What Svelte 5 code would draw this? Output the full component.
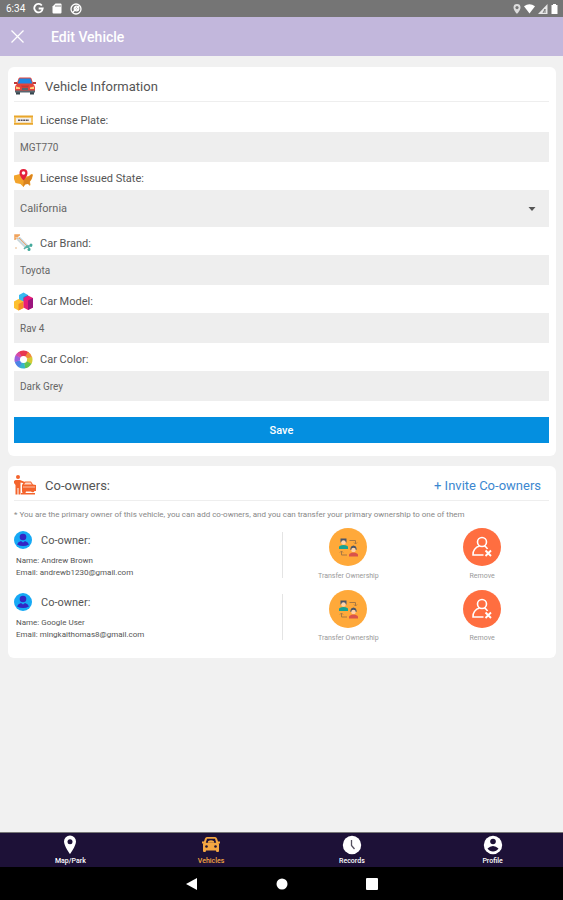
<script lang="ts">
	interface CoOwner {
		id: number;
		name: string;
		email: string;
	}

	const coOwners: CoOwner[] = [
		{ id: 1, name: 'Andrew Brown', email: 'andrewb1230@gmail.com' },
		{ id: 2, name: 'Google User', email: 'mingkaithomas8@gmail.com' }
	];

	const states = ['California', 'Nevada', 'Oregon', 'Washington'];
	const tabs = ['Map/Park', 'Vehicles', 'Records', 'Profile'];

	let plate = $state('MGT770');
	let issuedState = $state('California');
	let brand = $state('Toyota');
	let model = $state('Rav 4');
	let color = $state('Dark Grey');
	let activeTab = $state('Vehicles');
</script>

<div class="screen">
	<div class="status">
		<span>6:34</span>
		<svg width="11" height="11" viewBox="0 0 12 12" fill="none" stroke="#fff" stroke-width="2">
			<path d="M9.6 2.7A4.6 4.6 0 1 0 10.6 6H6.2" />
		</svg>
		<svg width="10" height="11" viewBox="0 0 10 11">
			<path fill="#fff" d="M3.5 0.5H8.5Q9.5 .5 9.5 1.5V9.5Q9.5 10.5 8.5 10.5H1.5Q.5 10.5 .5 9.5V3.5Z" />
			<path stroke="#888" d="M4 2v2M6 2v2M8 2v2" />
		</svg>
		<svg width="12" height="12" viewBox="0 0 12 12" fill="none" stroke="#fff" stroke-width="1.3">
			<circle cx="6" cy="6" r="5" />
			<circle cx="6.5" cy="5.5" r="2.3" />
			<path d="M2.5 9.5 9 3M4.8 4l3.4 3.4" />
		</svg>
		<div class="signals">
			<svg width="8" height="10" viewBox="0 0 8 10">
				<path fill="#ddd" d="M4 0a3.5 3.5 0 0 1 3.5 3.6C7.5 6.5 4 10 4 10S.5 6.5.5 3.6A3.5 3.5 0 0 1 4 0Z" />
				<circle cx="4" cy="3.6" r="1.6" fill="#777" />
			</svg>
			<svg width="11" height="10" viewBox="0 0 11 10">
				<path fill="#fff" d="M0 2.2Q5.5-1.5 11 2.2L5.5 9.5Z" />
			</svg>
			<svg width="10" height="10" viewBox="0 0 10 10">
				<path fill="#e8e8e8" d="M0 10 9.5 0V10Z" />
				<path stroke="#777" fill="none" d="M5 9l2-4v4" />
			</svg>
			<svg width="7" height="10" viewBox="0 0 7 10">
				<path fill="#fff" d="M2 0H5V1H6.5V10H.5V1H2Z" />
			</svg>
		</div>
	</div>

	<header>
		<button class="close" aria-label="Close">
			<svg width="13" height="13" viewBox="0 0 13 13" stroke="#fff" stroke-width="1.3">
				<path d="M.5.5 12.5 12.5M12.5.5.5 12.5" />
			</svg>
		</button>
		<h1>Edit Vehicle</h1>
	</header>

	<main>
		<form class="card" onsubmit={(event) => event.preventDefault()}>
			<div class="title">
				<svg width="22" height="18" viewBox="0 0 22 18">
					<path fill="#37474f" d="M2 13h4v4.500H2zM16 13h4v4.500h-4z" />
					<path fill="#e5453c" d="M4.500 1.500Q5 .5 6 .5H16Q17 .5 17.500 1.500L19.500 7.500Q21 8.500 21 10.500V15H1V10.500Q1 8.500 2.500 7.500Z" />
					<path fill="#1e88e5" d="M5.500 1.500H16.500L18.300 6.500H3.700Z" />
					<path fill="#c23a38" d="M0 5h3v2H0zM19 5h3v2h-3zM7 8.500h8l-1 2H8z" />
					<path fill="#ffd180" d="M2 9.500l4 1v1.500H2zM20 9.500l-4 1v1.500h4z" />
					<path fill="#596770" d="M1 13.500H21V15.500H1zM8 11h6v2H8z" />
				</svg>
				<h2>Vehicle Information</h2>
			</div>

			<div class="label">
				<svg width="19" height="19" viewBox="0 0 19 19">
					<path fill="#e9a62b" d="M0 4.500h19v2.300H0zM0 11.500h19v2.300H0z" />
					<path fill="#f4c56a" d="M0 6.800h2v4.700H0zM17 6.800h2v4.700h-2z" />
					<path fill="#f4f1ee" d="M2 6.800h15v4.700H2z" />
					<path stroke="#55505a" stroke-width="1.600" stroke-dasharray="2 .6" d="M4 9.200h11" />
				</svg>
				<label for="plate">License Plate:</label>
			</div>
			<input id="plate" bind:value={plate} />

			<div class="label">
				<svg width="19" height="19" viewBox="0 0 19 19">
					<path fill="#f3a42c" d="M0 6.500 6 5l6 2.500 3-.5 2.500-2 1.500.5-1 4-2 3 .5 4-2-2-3 .5-2 3-3-3-5-1-1.500-4Z" />
					<path fill="#da8420" d="M10 10l5-2.500 2-2 1.500.5-1 4-2 3 .5 4-2-2-3 .5-2 2.500Z" />
					<path fill="#e4213b" d="M9.500 0a4 4 0 0 1 4 4c0 3-4 7.500-4 7.500s-4-4.500-4-7.500a4 4 0 0 1 4-4Z" />
					<circle cx="9.500" cy="4" r="1.800" fill="#fff" />
				</svg>
				<label for="state">License Issued State:</label>
			</div>
			<div class="select">
				<select id="state" bind:value={issuedState}>
					{#each states as state (state)}
						<option>{state}</option>
					{/each}
				</select>
				<svg width="8" height="4" viewBox="0 0 8 4"><path fill="#555" d="M0.500 0H7.500L4 4Z" /></svg>
			</div>

			<div class="label">
				<svg width="19" height="19" viewBox="0 0 19 19">
					<path stroke="#f0a35c" stroke-width="1.500" fill="none" d="M1 6V1h5M1 1l4 4M5 1 1 5" />
					<path fill="#cfdde2" stroke="#a9bcc5" stroke-width=".6" d="M3 5.500 5.500 3 14.500 12 12 14.500Z" />
					<path stroke="#f1a56c" d="M5 4l8 8" />
					<path stroke="#55b3a7" stroke-width="1.500" fill="none" d="M10 15l3-3 5 0M13 12l3 3" />
					<circle cx="17" cy="11" r="1.500" fill="#43a99c" />
					<circle cx="15" cy="15.500" r="1.500" fill="#43a99c" />
					<circle cx="2" cy="14" r="1" fill="#f1d0b0" />
				</svg>
				<label for="brand">Car Brand:</label>
			</div>
			<input id="brand" bind:value={brand} />

			<div class="label">
				<svg width="19" height="19" viewBox="0 0 19 19">
					<path fill="#39b9f0" d="M5 3 9.500.5 14 3v6H5Z" />
					<path fill="#1686d0" d="M9.500 5 14 3v7H9.500Z" />
					<path fill="#fdc02f" d="M0 9.500 4.500 7 9.500 9.500V16L4.500 18.500 0 16Z" />
					<path fill="#f58b25" d="M4.500 12l5-2.500V16l-5 2.500Z" />
					<path fill="#e91e78" d="M9.500 6 14 3.500 19 6v9.500L14 18l-4.500-2.500Z" />
					<path fill="#9c147e" d="M14 8.500 19 6v9.500L14 18Z" />
				</svg>
				<label for="model">Car Model:</label>
			</div>
			<input id="model" bind:value={model} />

			<div class="label">
				<svg width="19" height="19" viewBox="0 0 19 19" fill="none" stroke-width="6">
					<path stroke="#e8384f" d="M5.800 4.800A6 6 0 0 1 13.200 4.800" />
					<path stroke="#ef8d3a" d="M12.500 4.300A6 6 0 0 1 15.300 8.200" />
					<path stroke="#d7cb35" d="M15.200 7.800A6 6 0 0 1 14.700 12.700" />
					<path stroke="#63c451" d="M14.800 12.300A6 6 0 0 1 10.300 15.400" />
					<path stroke="#35b6c9" d="M10.700 15.400A6 6 0 0 1 6.300 14.600" />
					<path stroke="#4c83e6" d="M6.700 14.800A6 6 0 0 1 3.700 10.800" />
					<path stroke="#9b62dc" d="M3.700 11.200A6 6 0 0 1 4.400 6.300" />
					<path stroke="#d84aa6" d="M4.200 6.700A6 6 0 0 1 6.500 4.300" />
					<circle cx="9.500" cy="9.500" r="3.500" fill="#fff" />
				</svg>
				<label for="color">Car Color:</label>
			</div>
			<input id="color" bind:value={color} />

			<button class="save">Save</button>
		</form>

		<section class="card owners">
			<div class="title">
				<svg width="22" height="20" viewBox="0 0 22 20" fill="#f4642d">
					<circle cx="4" cy="2" r="2" />
					<path d="M1.500 5H6L11 7V8.500L6.500 7.500V19.500H4.500V13H3.500V19.500H1.500V10L0 8V6Z" />
					<path d="M9 8.500 11 6.500H17L19 9.500 22 10V16H20.500A2 2 0 0 1 17 16.500H12A2 2 0 0 1 8 16.500V10Z" />
					<path fill="#ffd9c8" d="M11.500 7.500H16.500L17.800 9.500H10Z" />
					<path stroke="#ffd9c8" stroke-width=".8" d="M9 12H21" />
					<path d="M7 18h14v1.500H7z" />
				</svg>
				<h2>Co-owners:</h2>
				<a href="#invite">+ Invite Co-owners</a>
			</div>
			<p class="note">
				* You are the primary owner of this vehicle, you can add co-owners, and you can transfer your primary ownership to one of them
			</p>

			{#each coOwners as owner (owner.id)}
				<div class="owner">
					<div class="person">
						<div class="person-head">
							<svg width="18" height="18" viewBox="0 0 18 18">
								<circle cx="9" cy="9" r="9" fill="#16a9f5" />
								<circle cx="9" cy="6" r="3.300" fill="#3426c4" />
								<path fill="#3426c4" d="M3 13.500Q4 10.500 7 10L9 11.500 11 10Q14 10.500 15 13.500Q9 16.500 3 13.500Z" />
							</svg>
							<h3>Co-owner:</h3>
						</div>
						<p>Name: {owner.name}</p>
						<p>Email: {owner.email}</p>
					</div>
					<div class="actions">
						<button>
							<svg width="38" height="38" viewBox="0 0 38 38">
								<circle cx="19" cy="19" r="19" fill="#ffa93a" />
								<path fill="#4a5568" d="M11.500 10.500h6v4h-6z" />
								<circle cx="14.500" cy="14.500" r="2.300" fill="#ffd2a6" />
								<path fill="#16a394" d="M10 21V19Q10 17.500 14.500 17Q19 17.500 19 19V21Z" />
								<path fill="#4a5568" d="M21.500 22V20Q22 17.500 24.500 17.500T27.500 20V22Z" />
								<circle cx="24.500" cy="22" r="2.300" fill="#ffd2a6" />
								<path fill="#d9534a" d="M20 28.500V27Q20 25 24.500 24.500Q29 25 29 27V28.500Z" />
								<path stroke="#a97943" fill="none" d="M20.500 12.500H26.500V16M12.500 23V27H18M11 24.500l1.500-1.500 1.500 1.500M25 14.500l1.500 1.500 1.500-1.500" />
							</svg>
							Transfer Ownership
						</button>
						<button>
							<svg width="38" height="38" viewBox="0 0 38 38">
								<circle cx="19" cy="19" r="19" fill="#ff6e40" />
								<g fill="none" stroke="#fff" stroke-width="1.600">
									<circle cx="19" cy="14" r="4.500" />
									<path d="M16.500 18C12.500 19 9.500 23 10 27H20.500M21.500 18Q23.500 19 24.500 21" />
									<path stroke-width="1.900" d="M22.500 22.500l5.500 5.500M28 22.500 22.500 28" />
								</g>
							</svg>
							Remove
						</button>
					</div>
				</div>
			{/each}
		</section>
	</main>

	<nav class="tabs">
		{#each tabs as tab (tab)}
			<button class:active={tab === activeTab} onclick={() => (activeTab = tab)}>
				<svg width="20" height="20" viewBox="0 0 20 20" fill="currentColor">
					{#if tab === 'Map/Park'}
						<path d="M10 0.500a6 6 0 0 1 6 6C16 11 10 19 10 19S4 11 4 6.500a6 6 0 0 1 6-6Z" />
						<circle cx="10" cy="6.700" r="2.500" fill="#1d1137" />
					{:else if tab === 'Vehicles'}
						<path d="M4 3.500Q4.500 2 6 2H14Q15.500 2 16 3.500L17.500 8 18 9V16Q18 17 17 17H16Q15 17 15 15.500H5Q5 17 4 17H3Q2 17 2 16V9L2.500 8Z" />
						<path d="M1 6.500h3v2H1zM16 6.500h3v2h-3z" />
						<path fill="#1d1137" d="M6 3.800H14L15.200 7.700H4.800Z" />
						<path d="M7 6.300Q10 4.300 13 6.300V7.700H7Z" />
						<circle cx="5.500" cy="11.500" r="1.300" fill="#1d1137" />
						<circle cx="14.500" cy="11.500" r="1.300" fill="#1d1137" />
					{:else if tab === 'Records'}
						<circle cx="10" cy="10" r="9.200" />
						<path fill="none" stroke="#55505f" stroke-width="1.300" d="M9.500 5V10.500L12.500 14" />
					{:else}
						<circle cx="10" cy="10" r="9.200" />
						<circle cx="10" cy="6.500" r="2.800" fill="#1d1137" />
						<path fill="#1d1137" d="M4.500 13.500Q7 11 10 11T15.500 13.500Q13.500 16.500 10 16.500T4.500 13.500Z" />
					{/if}
				</svg>
				{tab}
			</button>
		{/each}
	</nav>

	<div class="system">
		<button aria-label="Back">
			<svg width="12" height="12" viewBox="0 0 12 12"><path fill="#fff" d="M0 6 11 0V12Z" /></svg>
		</button>
		<button aria-label="Home">
			<svg width="12" height="12" viewBox="0 0 12 12"><circle cx="6" cy="6" r="5.500" fill="#fff" /></svg>
		</button>
		<button aria-label="Overview">
			<svg width="12" height="12" viewBox="0 0 12 12"><rect width="12" height="12" rx="1" fill="#fff" /></svg>
		</button>
	</div>
</div>

<style>
	:global(body) {
		margin: 0;
		font-family: Roboto, Arial, sans-serif;
		color: #555;
	}

	.screen {
		display: flex;
		flex-direction: column;
		min-height: 100vh;
		background-color: #f1f1f1;
	}

	h1,
	h2,
	h3,
	p {
		margin: 0;
		font-weight: 400;
	}

	svg {
		display: block;
		flex: none;
	}

	button {
		padding: 0;
		border: none;
		background: none;
		font-family: inherit;
		cursor: pointer;
	}

	.status {
		display: flex;
		align-items: center;
		gap: 8px;
		height: 17px;
		padding: 0 5px 0 6px;
		background-color: #757575;
		color: #fff;
		font-size: 10px;
	}

	.signals {
		display: flex;
		gap: 3px;
		margin-left: auto;
	}

	header {
		display: flex;
		align-items: center;
		gap: 27px;
		height: 39px;
		padding: 0 11px;
		background-color: #c2b7dc;
	}

	h1 {
		color: #fff;
		font-size: 14px;
		font-weight: 500;
	}

	main {
		display: flex;
		flex: 1;
		flex-direction: column;
		gap: 10px;
		padding: 11px 7px 10px 8px;
	}

	.card {
		padding: 0 7px 13px 6px;
		border-radius: 6px;
		background-color: #fff;
	}

	.owners {
		padding-bottom: 6px;
	}

	.title {
		display: flex;
		align-items: center;
		gap: 9px;
		height: 35px;
		padding: 4px 8px 0 0;
		box-sizing: border-box;
		border-bottom: 1px solid #eee;
		margin-bottom: 2px;
	}

	h2,
	.title a {
		font-size: 13px;
	}

	.title a {
		margin-left: auto;
		color: #3c87d0;
		text-decoration: none;
	}

	.label {
		display: flex;
		align-items: center;
		gap: 7px;
		height: 28px;
		padding-top: 4px;
		box-sizing: border-box;
		font-size: 11px;
	}

	input,
	select {
		display: block;
		width: 100%;
		height: 30px;
		box-sizing: border-box;
		padding: 0 6px;
		border: none;
		border-radius: 0;
		background-color: #eee;
		color: #666;
		font-family: inherit;
		font-size: 10px;
	}

	.select {
		position: relative;
	}

	select {
		height: 37px;
		appearance: none;
		font-size: 11px;
	}

	.select svg {
		position: absolute;
		top: 17px;
		right: 13px;
		pointer-events: none;
	}

	.save {
		display: block;
		width: 100%;
		height: 26px;
		margin-top: 16px;
		background-color: #048fe0;
		color: #fff;
		font-size: 11px;
		font-weight: 500;
	}

	.note {
		padding: 6px 0 7px;
		color: #888;
		font-size: 8px;
		line-height: 12px;
	}

	.owner {
		display: flex;
		height: 62px;
	}

	.person,
	.actions {
		flex: 1;
	}

	.person-head {
		display: flex;
		align-items: center;
		gap: 9px;
		height: 24px;
		padding-bottom: 3px;
	}

	h3 {
		font-size: 11px;
	}

	.person p {
		padding-left: 2px;
		font-size: 8px;
		line-height: 12px;
	}

	.actions {
		display: flex;
		align-self: flex-start;
		background: linear-gradient(#e4e4e4, #e4e4e4) left 4px / 1px 46px no-repeat;
	}

	.actions button {
		display: flex;
		flex: 1;
		flex-direction: column;
		align-items: center;
		gap: 4px;
		color: #999;
		font-size: 7px;
		line-height: 12px;
	}

	.tabs {
		display: flex;
		height: 34px;
		border-top: 1px solid #777;
		background-color: #1d1137;
	}

	.tabs button {
		display: flex;
		flex: 1;
		flex-direction: column;
		align-items: center;
		padding-top: 2px;
		color: #fff;
		font-size: 7px;
		font-weight: 500;
		line-height: 12px;
	}

	.tabs button.active {
		color: #f5a742;
	}

	.system {
		display: flex;
		align-items: center;
		justify-content: center;
		gap: 78px;
		height: 33px;
		background-color: #000;
	}
</style>
